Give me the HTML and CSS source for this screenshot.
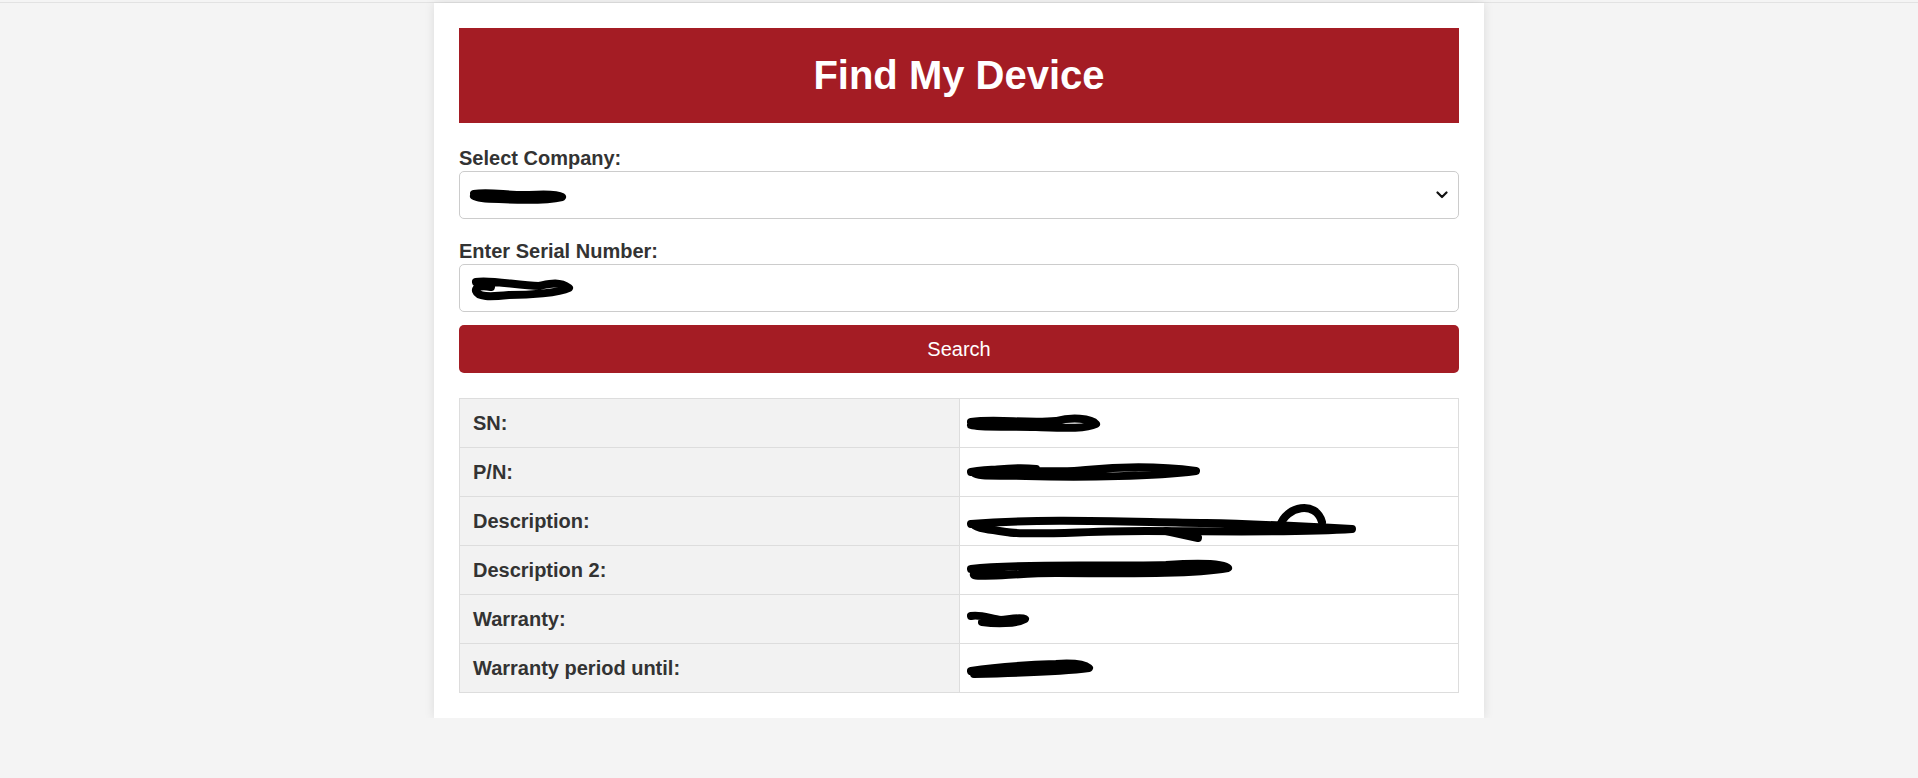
FILE: index.html
```html
<!DOCTYPE html>
<html lang="en">
<head>
<meta charset="utf-8">
<title>Find My Device</title>
<link rel="stylesheet" href="styles.css">
</head>
<body>
<div class="topline"></div>
<main class="card">
  <h1 class="title">Find My Device</h1>

  <div class="group">
    <label class="label">Select Company:</label>
    <div class="field">
      <svg class="scribble" width="98" height="18" viewBox="0 0 98 18"><path d="M5 8 C20 5 40 10 60 9 C75 8 88 8 93 11 C80 14 50 14 30 13 C15 13 8 12 5 10" /></svg>
      <svg class="chevron" width="12" height="8" viewBox="0 0 12 8"><path d="M1.5 1.5 L6 6 L10.5 1.5" /></svg>
    </div>
  </div>

  <div class="group group-last">
    <label class="label">Enter Serial Number:</label>
    <div class="field">
      <svg class="scribble" width="106" height="28" viewBox="0 0 106 28"><path d="M7 8 C20 5 50 12 70 12 C80 10 90 7 100 14 C90 19 60 21 40 21 C20 23 9 23 7 17 C6 13 12 11 22 13" /></svg>
    </div>
  </div>

  <button class="btn" type="button">Search</button>

  <table class="result">
    <colgroup><col class="col-key"><col class="col-val"></colgroup>
    <tr><td class="key">SN:</td><td class="val"><svg class="scribble" width="136" height="20" viewBox="0 0 136 20"><path d="M5 9 C30 5 60 11 90 8 C105 4 125 5 130 11 C120 16 100 15 70 14 C40 13 15 15 5 12" /></svg></td></tr>
    <tr><td class="key">P/N:</td><td class="val"><svg class="scribble" width="236" height="24" viewBox="0 0 236 24"><path d="M5 12 C40 5 80 15 120 10 C160 6 200 7 230 11 C190 16 120 18 60 16 C30 15 12 17 8 13 C30 9 50 7 70 9" /></svg></td></tr>
    <tr><td class="key">Description:</td><td class="val"><svg class="scribble tall" width="392" height="44" viewBox="0 0 392 44"><path d="M5 25 C80 19 160 23 240 24 C290 25 330 27 386 30 C330 34 250 32 180 32 C120 32 60 37 40 33 C25 31 10 29 8 26" /><path d="M314 27 C320 7 350 1 356 23" /><path d="M200 32 L232 39" /></svg></td></tr>
    <tr><td class="key">Description 2:</td><td class="val"><svg class="scribble" width="268" height="26" viewBox="0 0 268 26"><path d="M5 12 C60 6 140 10 200 8 C230 6 258 6 262 11 C220 18 150 16 90 16 C50 16 20 21 8 18 C6 15 20 12 40 13" /></svg></td></tr>
    <tr><td class="key">Warranty:</td><td class="val"><svg class="scribble" width="64" height="20" viewBox="0 0 64 20"><path d="M5 7 C15 5 25 10 35 11 C45 10 55 8 59 10 C50 15 30 15 16 13" /></svg></td></tr>
    <tr><td class="key">Warranty period until:</td><td class="val"><svg class="scribble" width="128" height="24" viewBox="0 0 128 24"><path d="M5 15 C30 11 60 9 90 8 C105 7 118 8 123 12 C100 15 50 17 8 18" /></svg></td></tr>
  </table>
</main>
</body>
</html>
```

FILE: styles.css
```css
html, body {
  margin: 0;
  padding: 0;
}

body {
  background: #f4f4f4;
  font-family: "Liberation Sans", Arial, sans-serif;
  color: #333;
}

.topline {
  height: 2px;
  border-bottom: 1px solid #e2e2e2;
}

.card {
  display: block;
  width: 1000px;
  margin: 0 auto;
  padding: 25px;
  background: #fff;
  box-shadow: 0 0 10px rgba(0, 0, 0, 0.1);
}

.title {
  margin: 0 0 23px;
  padding: 25px 0;
  background: #a41c24;
  color: #fff;
  text-align: center;
  font-size: 40px;
  line-height: 45px;
  font-weight: bold;
}

.group {
  margin-bottom: 20px;
}

.group-last {
  margin-bottom: 13px;
}

.label {
  display: block;
  font-size: 20px;
  line-height: 25px;
  font-weight: bold;
  color: #333;
  margin-bottom: 0;
}

.field {
  box-sizing: border-box;
  height: 48px;
  border: 1px solid #ccc;
  border-radius: 5px;
  padding: 0 10px 0 9px;
  display: flex;
  align-items: center;
  justify-content: space-between;
  background: #fff;
}

.scribble {
  display: block;
}

.scribble path {
  fill: none;
  stroke: #000;
  stroke-width: 8;
  stroke-linecap: round;
  stroke-linejoin: round;
}

.chevron path {
  fill: none;
  stroke: #111;
  stroke-width: 2.2;
  stroke-linecap: round;
  stroke-linejoin: round;
}

.btn {
  display: block;
  width: 100%;
  height: 48px;
  border: none;
  border-radius: 5px;
  background: #a41c24;
  color: #fff;
  font-family: "Liberation Sans", Arial, sans-serif;
  font-size: 20px;
  padding: 0;
}

.result {
  width: 100%;
  margin-top: 25px;
  border-collapse: collapse;
  table-layout: fixed;
}

.col-key,
.col-val {
  width: 50%;
}

.result td {
  border: 1px solid #ddd;
  padding: 12px 13px;
  height: 24px;
  line-height: 24px;
  font-size: 20px;
  vertical-align: middle;
}

.result .key {
  background: #f2f2f2;
  font-weight: bold;
  color: #333;
}

.result .val {
  background: #fff;
  padding-left: 6px;
}

.result .val .scribble {
  margin: -4px 0;
}

.result .val .scribble.tall {
  margin: -10px 0;
}
```
